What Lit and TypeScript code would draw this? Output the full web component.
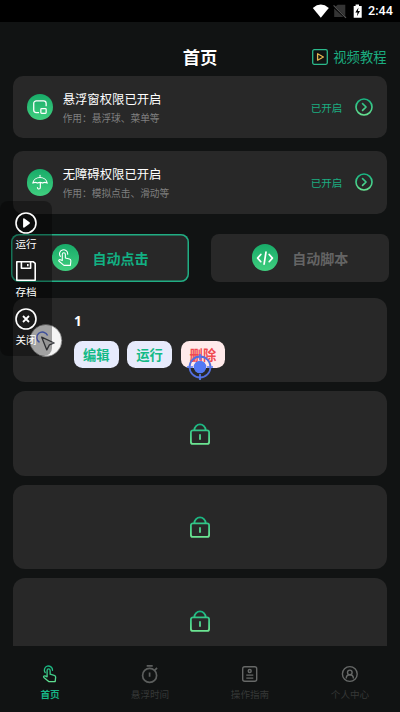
import { LitElement, html, css, svg, nothing } from "lit";
import { customElement } from "lit/decorators.js";
import { classMap } from "lit/directives/class-map.js";

const hand = (stroke: string, w: number) => svg`
  <g fill="none" stroke=${stroke} stroke-width=${w} stroke-linecap="round" stroke-linejoin="round">
    <path d="M3.9 7.8A4.3 4.3 0 1 1 11.6 5.4"/>
    <path d="M5.9 12.2V5.5a1.6 1.6 0 0 1 3.2 0v4l4.3 1.1c1.1.3 1.6 1 1.5 2.1l-.5 4.5H7.6L2.5 12.9c-.8-.8.1-2.1 1.3-1.6z"/>
  </g>`;

const grad = (id: string) => svg`
  <defs><linearGradient id=${id} gradientUnits="userSpaceOnUse" x1="0" y1="0" x2="0" y2="20">
    <stop offset="0" stop-color="#12b381"/><stop offset="1" stop-color="#6be592"/>
  </linearGradient></defs>`;

const windowIcon = svg`<g fill="none" stroke="#fff" stroke-width="1.1" transform="translate(-1.3 -1.1) scale(1.15)">
  <path d="M8.1 13.6H5.7A2.2 2.2 0 0 1 3.5 11.4V5.7A2.2 2.2 0 0 1 5.7 3.5H12.1A2.2 2.2 0 0 1 14.3 5.7V8.2"/>
  <rect x="9.7" y="10.1" width="4.6" height="4.2" rx=".7"/></g>`;
const umbrellaIcon = svg`<g fill="none" stroke="#fff" stroke-width="1.05" stroke-linecap="round" stroke-linejoin="round" transform="translate(-.7 -.3) scale(1.08)">
  <path d="M2.3 9.6a6.8 6.2 0 0 1 13.4 0q-2.2-1.2-4.4 0q-2.3-1.2-4.6 0q-2.2-1.2-4.4 0zM9 2.4v1M9.3 9.4v4.3a1.35 1.35 0 0 1-2.7 0"/></g>`;
const codeIcon = svg`<g fill="none" stroke="#fff" stroke-width="1.7" stroke-linecap="round" stroke-linejoin="round">
  <path d="M4.8 5.5L1.6 9.1l3.2 3.6M13.2 5.5l3.2 3.6-3.2 3.6M10 3L8.1 15.2"/></g>`;

@customElement("app-root")
export class AppRoot extends LitElement {
  static styles = css`
    :host {
      display: block;
      position: relative;
      width: 400px;
      height: 712px;
      overflow: hidden;
      background: #111313;
      color: #fff;
      font-family: Roboto, "Noto Sans CJK SC", sans-serif;
    }
    * { box-sizing: border-box; }
    svg { display: block; flex: none; }
    .screen { display: flex; flex-direction: column; height: 712px; }
    .status {
      height: 21.5px; flex: none; background: #000;
      display: flex; align-items: center; justify-content: flex-end;
      padding-right: 7px; font-size: 12.6px; font-weight: 500;
    }
    .status .time { margin-left: -4.5px; width: 25px; white-space: nowrap; }
    .header {
      flex: none; height: 54.5px; padding: 15px 13.5px 0;
      display: grid; grid-template-columns: 1fr auto 1fr; align-items: start;
    }
    .header h1 { grid-column: 2; margin: 0; font-size: 17.3px; line-height: 42px; font-weight: 700; }
    .video {
      justify-self: end; display: flex; align-items: center; gap: 5.5px;
      font-size: 13.3px; line-height: 40px; color: #1bad80;
    }
    .video span { padding-top: 1px; line-height: 39px; }
    .card {
      flex: none; margin: 0 13.3px 13.2px; height: 62.2px; padding: 0 13.3px;
      border-radius: 10px; background: #282828;
      display: flex; align-items: center;
    }
    .disc {
      width: 26.6px; height: 26.6px; border-radius: 50%; flex: none;
      background: linear-gradient(#18ab69, #40cf7f);
      display: grid; place-items: center;
    }
    .info { margin-left: 9.5px; flex: 1; padding-top: 2px; }
    .name { font-size: 12.35px; line-height: 18px; }
    .desc { font-size: 9.7px; line-height: 14px; margin-top: 3px; color: #7f7f7f; }
    .state { font-size: 10.6px; color: #1bad80; margin-right: 13px; }
    .tabs { flex: none; display: flex; justify-content: space-between; padding: 0 11px; margin-top: 7px; height: 48px; }
    .tab {
      width: 178.3px; height: 48px; border-radius: 8px; background: #282828;
      display: flex; align-items: center; padding-left: 41px; gap: 14px;
      font-size: 14px; line-height: 20px; color: #646464;
    }
    .tab b { font-weight: 700; padding-top: 1.6px; }
    .tab.on { box-shadow: inset 0 0 0 1.5px #20ad83; color: #12b083; }
    .list { flex: 1; overflow: hidden; padding: 0 13.3px; margin-top: 16px; display: flex; flex-direction: column; gap: 8.8px; }
    .slot {
      flex: none; height: 84.7px; border-radius: 12px; background: #282828;
      display: flex; align-items: center; justify-content: center;
    }
    .script { flex-direction: column; align-items: flex-start; justify-content: flex-start; padding: 14px 0 0 60.7px; }
    .num { font: 700 13.5px/18px "Noto Sans", sans-serif; }
    .actions { display: flex; gap: 8.6px; margin-top: 11.6px; }
    .btn {
      width: 44.7px; height: 27px; border-radius: 8.5px; background: #e7ebfc; color: #13ba86;
      font-size: 13.3px; font-weight: 700; line-height: 30px; text-align: center;
    }
    .btn.danger { background: #ffeaea; color: #f04a50; }
    .nav { flex: none; height: 66px; display: flex; padding-top: 18px; }
    .item { flex: 1; display: flex; flex-direction: column; align-items: center; font-size: 9.6px; line-height: 14px; color: #363837; gap: 3.5px; }
    .item.on { color: #17b587; font-weight: 700; }
    .pointer { position: absolute; left: 29px; top: 323.5px; }
    .target { position: absolute; left: 186px; top: 353px; }
    .float {
      position: absolute; left: 0; top: 201px; width: 52px; height: 155px;
      border-radius: 8px; background: rgba(0, 0, 0, 0.34);
      display: flex; flex-direction: column; align-items: center; padding-top: 11.3px;
      font-size: 10.6px; line-height: 14px;
    }
    .tool { height: 48.5px; display: flex; flex-direction: column; align-items: center; gap: 3.8px; }
  `;

  private disc(icon: unknown) {
    return html`<span class="disc"><svg width="18" height="18" viewBox="0 0 18 18">${icon}</svg></span>`;
  }

  private card(icon: unknown, name: string, desc: string) {
    return html`<section class="card">
      ${this.disc(icon)}
      <div class="info"><div class="name">${name}</div><div class="desc">${desc}</div></div>
      <span class="state">已开启</span>
      <svg width="18" height="18" viewBox="0 0 20 20">${grad("ring")}
        <circle cx="10" cy="10" r="8.9" fill="none" stroke="url(#ring)" stroke-width="1.8"/>
        <path d="M8.4 6.2l3.9 3.8-3.9 3.8" fill="none" stroke="url(#ring)" stroke-width="1.8" stroke-linecap="round" stroke-linejoin="round"/>
      </svg>
    </section>`;
  }

  private lock() {
    return html`<div class="slot"><svg width="20" height="22" viewBox="0 0 20 22">${grad("lock")}
      <g fill="none" stroke="url(#lock)" stroke-width="1.8" stroke-linecap="round">
        <rect x=".9" y="7.3" width="18.2" height="13.6" rx="2"/>
        <path d="M4.4 7A5.6 5.6 0 0 1 15.6 7M10 11.8v4.3"/>
      </g></svg></div>`;
  }

  private navItem(label: string, icon: unknown, on = false) {
    return html`<div class=${classMap({ item: true, on })}>
      <svg width="20" height="20" viewBox="0 0 20 20">${on ? grad("nav") : nothing}${icon}</svg>
      <span>${label}</span></div>`;
  }

  private tool(label: string, icon: unknown) {
    return html`<div class="tool">
      <svg width="22" height="22" viewBox="0 0 22 22" fill="none" stroke="#fff" stroke-width="1.6" stroke-linejoin="round">${icon}</svg>
      <span>${label}</span></div>`;
  }

  render() {
    return html`
      <div class="screen">
        <div class="status">
          <svg width="67" height="16" viewBox="0 0 67 16">
            <path d="M14.8 15.2L6.8 5.4Q14.8-1.4 22.8 5.4z" transform="translate(0 -.4)" fill="#fff"/>
            <path d="M29.5 3.6L31.7 1.8H39.3V13L29.5 3.6M28.2 5.6L37.4 14H28.2z" fill="#343434"/>
            <path d="M27.6 2.3L40 14.8" stroke="#555" stroke-width="1.2"/>
            <path d="M48 3.1h1.9V1.4h3.4v1.7H56v11.7h-8z" transform="translate(-.3 0)" fill="#fff"/>
            <path d="M52.5 4.4l-3.2 5h2.2l-.6 3.8 3.1-5.1h-2.1z" fill="#000"/>
          </svg>
          <span class="time">2:44</span>
        </div>
        <header class="header">
          <h1>首页</h1>
          <div class="video">
            <svg width="16" height="16" viewBox="0 0 16 16" fill="none">
              <rect x=".7" y=".7" width="14.6" height="14.6" rx="1.5" stroke="#2bb98b" stroke-width="1.3"/>
              <path d="M5.6 4.8v6.4l5.8-3.2z" stroke="#e5b852" stroke-width="1.3" stroke-linejoin="round"/>
            </svg>
            <span>视频教程</span>
          </div>
        </header>
        ${this.card(windowIcon, "悬浮窗权限已开启", "作用：悬浮球、菜单等")}
        ${this.card(umbrellaIcon, "无障碍权限已开启", "作用：模拟点击、滑动等")}
        <div class="tabs">
          <div class="tab on">${this.disc(svg`<g transform="translate(.7 0) scale(.95)">${hand("#fff", 1.15)}</g>`)}<b>自动点击</b></div>
          <div class="tab">${this.disc(codeIcon)}<b>自动脚本</b></div>
        </div>
        <main class="list">
          <section class="slot script">
            <div class="num">1</div>
            <div class="actions">
              <span class="btn">编辑</span><span class="btn">运行</span><span class="btn danger">删除</span>
            </div>
          </section>
          ${this.lock()}${this.lock()}${this.lock()}
        </main>
        <nav class="nav">
          ${this.navItem("首页", svg`<g transform="translate(1.5 1.2) scale(.95)">${hand("url(#nav)", 1.4)}</g>`, true)}
          ${this.navItem("悬浮时间", svg`<g fill="none" stroke="#5c5e5d" stroke-width="1.7">
            <circle cx="9.6" cy="11.4" r="7"/><path d="M6.7 1.9h6M14.7 6.1l2.4-2.1M9.6 8.4v4.4"/></g>`)}
          ${this.navItem("操作指南", svg`<g fill="none" stroke="#666867" stroke-width="1.4">
            <rect x="2.7" y="2.7" width="14" height="14.6" rx="2"/><circle cx="9.7" cy="7" r="1.5"/><path d="M6.3 11.1h7M6.3 14.1h7"/></g>`)}
          ${this.navItem("个人中心", svg`<g fill="none" stroke="#666867" stroke-width="1.4">
            <circle cx="9.8" cy="10" r="7.4"/><circle cx="9.8" cy="8.4" r="2.3"/><path d="M6.2 14.5c.1-5 7.1-5 7.2 0"/></g>`)}
        </nav>
      </div>

      <svg class="pointer" width="34" height="34" viewBox="0 0 34 34">
        <circle cx="16.8" cy="16.5" r="16" fill="#f5f5f5" stroke="#777" stroke-width=".7"/>
        <path d="M10.5 18.4A5.6 5.6 0 1 1 18.6 11.6" fill="none" stroke="#5d78ec" stroke-width="1.5"/>
        <path d="M12.7 13.2L25.2 19l-4.8 1.9-2.6 5z" fill="#e3e3e3" stroke="#46484d" stroke-width="1.3" stroke-linejoin="round"/>
      </svg>
      <svg class="target" width="28" height="28" viewBox="0 0 28 28">
        <circle cx="14" cy="14" r="10.5" fill="none" stroke="#536fde" stroke-width="1.8"/>
        <circle cx="14" cy="14" r="6.3" fill="#5379f4"/>
        <path d="M14 1v6M14 21v6M1 14h6M21 14h6" stroke="#5379f4" stroke-width="1.7"/>
      </svg>
      <aside class="float">
        ${this.tool("运行", svg`<circle cx="11" cy="11" r="10"/><path d="M8.9 7.1v7.8l5.2-3.9z" fill="#fff"/>`)}
        ${this.tool("存档", svg`<path d="M1.8 1.8H18.4L20.2 3.4V20.2H1.8zM6.4 1.8V8.2H15.6V1.8M12.8 4v2.2"/>`)}
        ${this.tool("关闭", svg`<circle cx="11" cy="11" r="10"/><path d="M8 8l6 6M14 8l-6 6" stroke-width="1.8"/>`)}
      </aside>
    `;
  }
}
